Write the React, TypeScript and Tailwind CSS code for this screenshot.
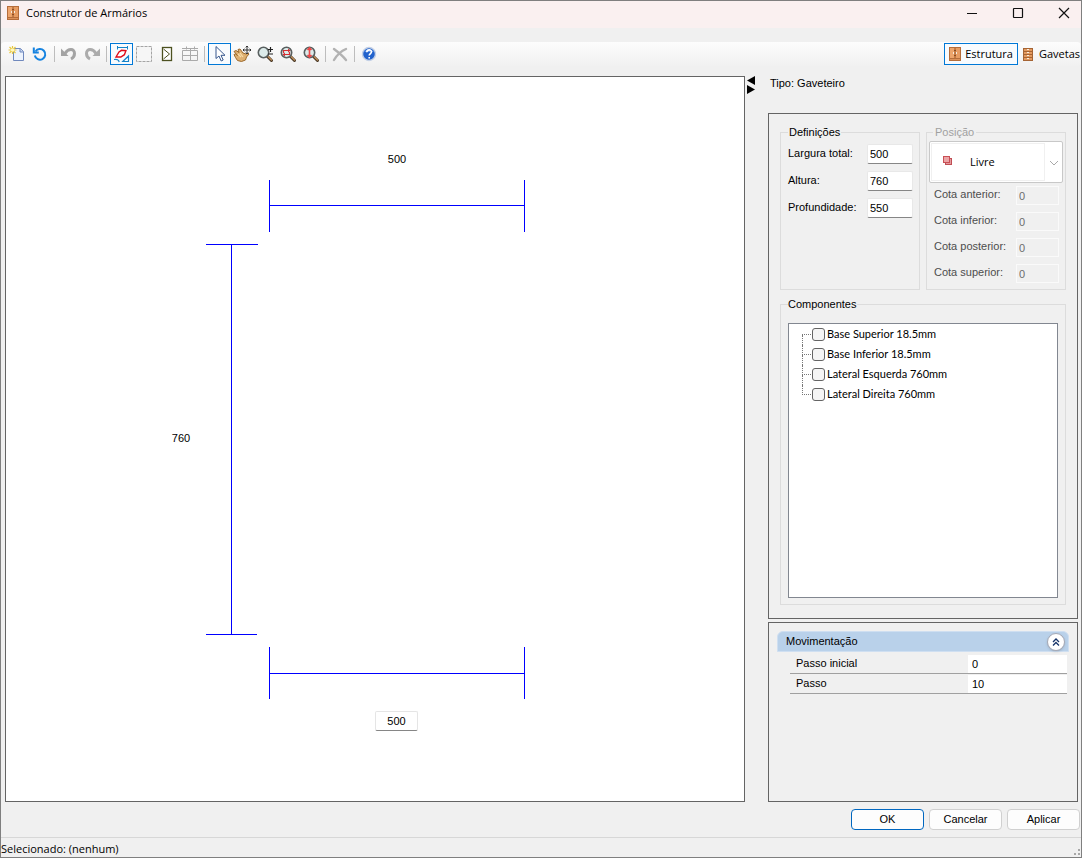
import React from "react";

type IconProps = { children: React.ReactNode };

const Icon = ({ children }: IconProps) => (
  <svg width="18" height="18" viewBox="0 0 18 18" aria-hidden="true" className="shrink-0">
    {children}
  </svg>
);

const CabinetIcon = () => (
  <svg width="12" height="14" viewBox="0 0 12 14" aria-hidden="true" className="shrink-0">
    <rect width="12" height="14" fill="#b56d3a" />
    <rect x="1" y="1" width="4.5" height="10" fill="#eda56c" />
    <rect x="6.5" y="1" width="4.5" height="10" fill="#e79c62" />
    <rect x="1" y="12" width="10" height="1" fill="#dc9159" />
    <path d="M6 1V11" stroke="#b46c38" />
    <path d="M4 5h1v2H4zM7 5h1v2H7z" fill="#f4ece0" />
    <path d="M5 3h2v1H5zM5 8h2v1H5z" fill="#8b4c22" />
  </svg>
);

const DrawersIcon = () => (
  <svg width="10" height="13" viewBox="0 0 10 13" aria-hidden="true" className="shrink-0">
    <rect width="10" height="13" fill="#a56434" />
    {[1, 4, 7, 10].map((y) => (
      <g key={y}>
        <rect x="1" y={y} width="8" height="2" fill="#e39a60" />
        <rect x="4" y={y} width="2" height="1" fill="#f7eddf" />
      </g>
    ))}
  </svg>
);

const Lens = ({ children }: IconProps) => (
  <Icon>
    <path d="M11 11l4.500 4.500" stroke="#4b3a28" strokeWidth="3" strokeLinecap="round" />
    <path d="M12 11.500l3.500 3.500" stroke="#c0905a" strokeWidth="1.300" strokeLinecap="round" />
    <circle cx="7.500" cy="7.500" r="5.200" fill="#dcebea" stroke="#596060" strokeWidth="1.600" />
    {children}
  </Icon>
);

const icons = {
  novo: (
    <Icon>
      <path d="M5.500 3.500h7l3 3v9h-10z" fill="#edf3fd" stroke="#7089bd" />
      <path d="M12 3.500V7h3.500" fill="#c7d7f3" stroke="#7089bd" />
      <path d="M4.500 1v8M.5 5h8M1.500 2l6 6M7.500 2l-6 6" stroke="#e9c83c" strokeWidth="1.200" />
      <circle cx="4.500" cy="5" r="1.700" fill="#fff9c0" />
    </Icon>
  ),
  recarregar: (
    <Icon>
      <path d="M4.500 6.500A5.300 5.300 0 1 1 3.800 10.500" fill="none" stroke="#1683e0" strokeWidth="2" />
      <path d="M2.800 2.500v5h5" fill="none" stroke="#1683e0" strokeWidth="2" />
    </Icon>
  ),
  desfazer: (
    <Icon>
      <path d="M5 8.500C8 3.500 14.500 3 14.500 8.500c0 2.500-1.500 4.500-3.500 5.500" fill="none" stroke="#a4a4a4" strokeWidth="3" />
      <path d="M1 3.500V11h7.500z" fill="#a4a4a4" />
    </Icon>
  ),
  refazer: (
    <Icon>
      <path d="M13 8.500C10 3.500 3.500 3 3.500 8.500c0 2.500 1.500 4.500 3.500 5.500" fill="none" stroke="#acacac" strokeWidth="3" />
      <path d="M17 3.500V11H9.500z" fill="#acacac" />
    </Icon>
  ),
  cotas: (
    <Icon>
      <path d="M4.500 1v3.500M14.500 1v3.500M4.500 2.500h10" fill="none" stroke="#1583c8" />
      <path d="M3 12l3-5L8.600 5.300l4.300.4-1.500 4L7.800 12z" fill="#fff" stroke="#e00c18" strokeWidth="1.400" />
      <path d="M1 14.500c3-.7 4.700.3 5.200 2.500M9.800 16.500H15.500V11z" fill="none" stroke="#1583c8" strokeWidth="1.200" />
    </Icon>
  ),
  selecao: (
    <Icon>
      <rect x="1.500" y="1.500" width="15" height="15" fill="#f6f6f6" stroke="#a4a4a4" strokeDasharray="3 1" />
    </Icon>
  ),
  porta: (
    <Icon>
      <rect x="4.500" y="2.500" width="9" height="13" fill="#fff" stroke="#4c5120" strokeWidth="1.300" />
      <path d="M5.500 4l6 5-6 5" fill="none" stroke="#4c5120" />
    </Icon>
  ),
  grade: (
    <Icon>
      <path d="M1.500 5.500h15v10h-15zM1.500 10.500h15M9.500 3.500v12M5.500 1.500v3M13.500 1.500v3M1 3.500h16" fill="none" stroke="#aaa" />
    </Icon>
  ),
  ponteiro: (
    <Icon>
      <path d="M5 1.500v12l3-2.500 2.200 5 2-1-2.200-4.700h4z" fill="#fff" stroke="#36578e" />
    </Icon>
  ),
  mover: (
    <Icon>
      <path d="M1 6.500l2-1 3 2-1-3 2-.5 3 4 3 1 2-1 1 1-2.500 3-1 3-4 1.500-4-1-2-3-1.500-3 1.500-.5 2 1.500z" fill="#deb071" stroke="#9c6829" />
      <path d="M5 9l3 3M7 8l3 4" stroke="#f9dda9" strokeWidth="1.200" />
      <path d="M14 1v8M10 5h8M12.700 2.300L14 1l1.300 1.300M12.700 7.700L14 9l1.300-1.300M11.300 3.700L10 5l1.300 1.300M16.700 3.700L18 5l-1.300 1.300" fill="none" stroke="#343434" />
    </Icon>
  ),
  zoom: (
    <Lens>
      <path d="M12 4.500h5M14.500 2v5M12 9h5" stroke="#222" strokeWidth="1.200" />
    </Lens>
  ),
  zoomJanela: (
    <Lens>
      <path d="M4.500 8V5.500h5M10.500 7v2.500h-5" fill="none" stroke="#d52e32" strokeWidth="1.200" />
      <path d="M9 3.500l2.500 2L9 7.500zM6 7.500l-2.500 2 2.500 2z" fill="#d52e32" />
    </Lens>
  ),
  zoomTotal: (
    <Lens>
      <path d="M7.500 4v7M5.500 5l2-2 2 2M5.500 10l2 2 2-2" fill="none" stroke="#ed4848" strokeWidth="1.600" />
    </Lens>
  ),
  apagar: (
    <Icon>
      <path d="M3 4c4 3 8 6 12 11M15 4C10 6 6 10 3 15" fill="none" stroke="#b2b2b2" strokeWidth="2.400" strokeLinecap="round" />
    </Icon>
  ),
  ajuda: (
    <Icon>
      <circle cx="9" cy="9" r="6.500" fill="#2262cc" stroke="#c3d0e6" strokeWidth="1.400" />
      <path d="M4 7a5.500 4 0 0 1 10 0" fill="#5d93e7" />
      <path d="M6.800 7.200c0-3 4.700-3 4.700-.4 0 1.700-2.300 1.800-2.300 3.800M9.200 12v1.500" fill="none" stroke="#fff" strokeWidth="1.600" />
    </Icon>
  ),
};

type Tool = { id: keyof typeof icons; label: string; active?: boolean; disabled?: boolean };

const toolGroups: Tool[][] = [
  [
    { id: "novo", label: "Novo" },
    { id: "recarregar", label: "Recarregar" },
  ],
  [
    { id: "desfazer", label: "Desfazer", disabled: true },
    { id: "refazer", label: "Refazer", disabled: true },
  ],
  [
    { id: "cotas", label: "Cotas", active: true },
    { id: "selecao", label: "Seleção" },
    { id: "porta", label: "Porta" },
    { id: "grade", label: "Grade" },
  ],
  [
    { id: "ponteiro", label: "Ponteiro", active: true },
    { id: "mover", label: "Mover" },
    { id: "zoom", label: "Zoom" },
    { id: "zoomJanela", label: "Zoom janela" },
    { id: "zoomTotal", label: "Zoom total" },
  ],
  [{ id: "apagar", label: "Apagar", disabled: true }],
  [{ id: "ajuda", label: "Ajuda" }],
];

const TitleBar = () => (
  <header className="flex h-[27px] items-center gap-3 bg-[#faf0f0] pb-[3px] pl-1.5">
    <div className="flex flex-1 items-center gap-[7px]">
      <CabinetIcon />
      <h1 className="font-['Open_Sans',sans-serif] text-[11px] leading-4">Construtor de Armários</h1>
    </div>
    <button aria-label="Minimizar" className="flex h-6 w-[34px] items-center justify-center">
      <svg width="12" height="12" viewBox="0 0 12 12"><rect x="1" y="6" width="10" height="1" fill="#111" /></svg>
    </button>
    <button aria-label="Maximizar" className="flex h-6 w-[34px] items-center justify-center">
      <svg width="12" height="12" viewBox="0 0 12 12"><rect x="1.500" y="1.500" width="9" height="9" rx="0.500" fill="none" stroke="#111" strokeWidth="1.200" /></svg>
    </button>
    <button aria-label="Fechar" className="flex h-6 w-[34px] items-center justify-center">
      <svg width="12" height="12" viewBox="0 0 12 12"><path d="M1 1l10 10M11 1L1 11" stroke="#111" strokeWidth="1.200" /></svg>
    </button>
  </header>
);

const Toolbar = () => (
  <div role="toolbar" className="mt-3.5 flex h-6 items-center rounded-sm bg-linear-to-b from-[#fdfdfd] to-[#f1f1f1] pl-[5px]">
    {toolGroups.map((group, i) => (
      <React.Fragment key={i}>
        {i > 0 && <span className="mr-[3px] ml-0.5 h-4 w-px bg-[#bdbdbd]" />}
        {group.map((tool) => (
          <button
            key={tool.id}
            aria-label={tool.label}
            disabled={tool.disabled}
            className={
              tool.active
                ? "flex h-[22px] w-[23px] items-center justify-center border border-[#0078d7] bg-[#f8fbfe]"
                : "flex h-[22px] w-[23px] items-center justify-center pr-px"
            }
          >
            {icons[tool.id]}
          </button>
        ))}
      </React.Fragment>
    ))}
    <div className="ml-auto flex font-['Open_Sans',sans-serif] text-[11px]">
      <button className="flex h-[22px] items-center gap-1 border border-[#0078d7] bg-[#f8fbfe] px-1">
        <CabinetIcon />
        Estrutura
      </button>
      <button className="flex h-[22px] items-center gap-1.5 pr-px pl-[5px]">
        <DrawersIcon />
        Gavetas
      </button>
    </div>
  </div>
);

const Drawing = () => (
  <section aria-label="Desenho" className="relative min-h-[680px] min-w-0 flex-1 border border-[#646464] bg-white">
    <svg className="absolute inset-0 h-full w-full" aria-label="Cotas do armário">
      <g fill="#0000ff">
        <rect x="263" y="103" width="1" height="52" />
        <rect x="263" y="128" width="256" height="1" />
        <rect x="518" y="103" width="1" height="52" />
        <rect x="200" y="167" width="52" height="1" />
        <rect x="225" y="167" width="1" height="391" />
        <rect x="200" y="557" width="51" height="1" />
        <rect x="263" y="570" width="1" height="52" />
        <rect x="263" y="596" width="256" height="1" />
        <rect x="518" y="570" width="1" height="52" />
      </g>
      <g fill="#000" fontSize="11" textAnchor="middle">
        <text x="391" y="86">500</text>
        <text x="175" y="365">760</text>
      </g>
    </svg>
    <input
      aria-label="Largura inferior"
      defaultValue="500"
      className="absolute top-[634px] left-[369px] h-5 w-[43px] rounded-xs border border-[#e5e5e5] border-b-[#868686] bg-white text-center"
    />
  </section>
);

const Field = ({ id, label, value }: { id: string; label: string; value: string }) => (
  <div className="flex h-[27px] items-start justify-between">
    <label htmlFor={id} className="pt-px leading-4">{label}</label>
    <input
      id={id}
      defaultValue={value}
      className="h-5 w-[46px] rounded-xs border border-[#e8e8e8] border-b-[#868686] bg-white px-0.5"
    />
  </div>
);

const LevelField = ({ id, label }: { id: string; label: string }) => (
  <div className="flex h-[26px] items-start justify-between">
    <label htmlFor={id} className="leading-4 text-[#4d4d4d]">{label}</label>
    <input id={id} defaultValue="0" disabled className="h-[19px] w-[43px] border border-[#fafafa] bg-[#f0f0f0] px-0.5 text-[#6d6d6d]" />
  </div>
);

const components = ["Base Superior 18.5mm", "Base Inferior 18.5mm", "Lateral Esquerda 760mm", "Lateral Direita 760mm"];

const Structure = () => (
  <section className="flex flex-1 flex-col gap-1.5 border border-[#646464] px-[11px] pt-2.5 pb-[13px]">
    <div className="grid grid-cols-2 gap-1.5">
      <fieldset className="h-[166px] min-w-0 border border-[#dcdcdc] pr-1.5 pl-[7px]">
        <legend className="px-px leading-4">Definições</legend>
        <div className="pt-1">
          <Field id="largura" label="Largura total:" value="500" />
          <Field id="altura" label="Altura:" value="760" />
          <Field id="profundidade" label="Profundidade:" value="550" />
        </div>
      </fieldset>
      <fieldset className="h-[166px] min-w-0 border border-[#dcdcdc] px-0.5">
        <legend className="ml-1 px-0.5 leading-4 text-[#a0a0a0]">Posição</legend>
        <div className="relative mt-px">
          <select
            aria-label="Posição"
            className="block h-[42px] w-full appearance-none rounded-xs border border-[#c8c8c8] bg-white pl-10 font-['Open_Sans',sans-serif] text-[11px]"
          >
            <option>Livre</option>
          </select>
          <svg width="9" height="9" viewBox="0 0 9 9" aria-hidden="true" className="pointer-events-none absolute top-[15px] left-3.5">
            <rect x="2.500" y="2.500" width="6" height="6" fill="#e49a9d" stroke="#c04e54" />
            <rect x="0.500" y="0.500" width="6" height="6" fill="#eba4a6" stroke="#c94f55" />
          </svg>
          <span className="pointer-events-none absolute inset-y-0.5 right-[18px] left-0.5 border border-[#f0f0f0]" />
          <svg width="10" height="6" viewBox="0 0 10 6" aria-hidden="true" className="pointer-events-none absolute top-[19px] right-1">
            <path d="M1 1l4 4 4-4" fill="none" stroke="#a9a9a9" />
          </svg>
        </div>
        <div className="pt-[3px] pr-1 pl-[5px]">
          <LevelField id="anterior" label="Cota anterior:" />
          <LevelField id="inferior" label="Cota inferior:" />
          <LevelField id="posterior" label="Cota posterior:" />
          <LevelField id="superior" label="Cota superior:" />
        </div>
      </fieldset>
    </div>
    <fieldset className="flex min-w-0 flex-1 flex-col border border-[#dcdcdc] px-[7px] pb-1.5">
      <legend className="leading-4">Componentes</legend>
      <ul className="mt-[11px] flex-1 border border-[#828790] bg-white pt-px pl-[13px] font-[Lato,sans-serif]">
        {components.map((name, i) => (
          <li key={name} className="flex h-5 items-center">
            <span className="mr-px grid h-full w-[9px] grid-rows-2">
              <span className={i > 0 ? "border-b border-l border-dotted border-[#777]" : "border-b border-dotted border-[#777]"} />
              <span className={i < components.length - 1 ? "border-l border-dotted border-[#777]" : ""} />
            </span>
            <label className="flex h-[19px] items-center gap-0.5 self-start">
              <input type="checkbox" className="size-[13px] appearance-none rounded-[3px] border border-[#646464] bg-[#f5f5f5] checked:bg-[#0067c0]" />
              {name}
            </label>
          </li>
        ))}
      </ul>
    </fieldset>
  </section>
);

const Movement = () => (
  <section className="mt-[3px] h-[180px] border border-[#646464] p-2">
    <div className="flex h-[21px] items-center justify-between rounded-t-md border border-[#cfdff1] bg-[#b9d1ea] pr-[3px] pl-2">
      <h2>Movimentação</h2>
      <button aria-label="Recolher" className="flex size-[18px] items-center justify-center rounded-full border border-[#a4a8b5] bg-white shadow-sm">
        <svg width="8" height="8" viewBox="0 0 8 8" aria-hidden="true">
          <path d="M1 4l3-3 3 3M1 7.500l3-3 3 3" fill="none" stroke="#173469" strokeWidth="1.300" />
        </svg>
      </button>
    </div>
    <div className="mt-0.5 pr-0.5 pl-[13px]">
      {[
        { id: "passo-inicial", label: "Passo inicial", value: "0" },
        { id: "passo", label: "Passo", value: "10" },
      ].map((row) => (
        <div key={row.id} className="flex h-5 items-center border-b border-[#a0a0a0]">
          <label htmlFor={row.id} className="flex-1 pl-1.5">{row.label}</label>
          <input id={row.id} defaultValue={row.value} className="h-[18px] w-[99px] bg-white px-1" />
        </div>
      ))}
    </div>
  </section>
);

export default function App() {
  return (
    <div className="flex min-h-screen flex-col border border-[#7f7f7f] bg-[#f0f0f0] font-['Liberation_Sans',Arial,sans-serif] text-[11px] text-black">
      <TitleBar />
      <Toolbar />
      <main className="mt-2.5 flex flex-1 pr-[3px] pl-1">
        <Drawing />
        <div className="flex w-[23px] shrink-0 flex-col pl-0.5">
          <button aria-label="Expandir painel" className="h-[9px] w-2">
            <svg width="8" height="9" viewBox="0 0 8 9"><path d="M8 0v9L0 4.500z" /></svg>
          </button>
          <button aria-label="Recolher painel" className="h-[9px] w-2">
            <svg width="8" height="9" viewBox="0 0 8 9"><path d="M0 0v9l8-4.500z" /></svg>
          </button>
        </div>
        <aside className="flex w-[310px] shrink-0 flex-col">
          <p className="h-[37px] pl-0.5 leading-[14px]">Tipo: Gaveteiro</p>
          <Structure />
          <Movement />
        </aside>
      </main>
      <div className="mt-[7px] flex justify-end gap-[5px] pr-px">
        <button className="h-[21px] w-[73px] rounded-sm border border-[#0067c0] bg-[#fdfdfd]">OK</button>
        <button className="h-[21px] w-[73px] rounded-sm border border-[#d0d0d0] bg-[#fdfdfd]">Cancelar</button>
        <button className="h-[21px] w-[73px] rounded-sm border border-[#d0d0d0] bg-[#fdfdfd]">Aplicar</button>
      </div>
      <footer className="mt-[7px] flex h-5 items-end justify-between border-t border-[#d7d7d7] font-['Open_Sans',sans-serif] text-[11px] leading-4">
        <span>Selecionado: (nenhum)</span>
        <svg width="8" height="8" viewBox="0 0 8 8" aria-hidden="true">
          <path d="M5 0h2v2H5zM1 4h2v2H1zM5 4h2v2H5z" fill="#a7a7a7" />
        </svg>
      </footer>
    </div>
  );
}
